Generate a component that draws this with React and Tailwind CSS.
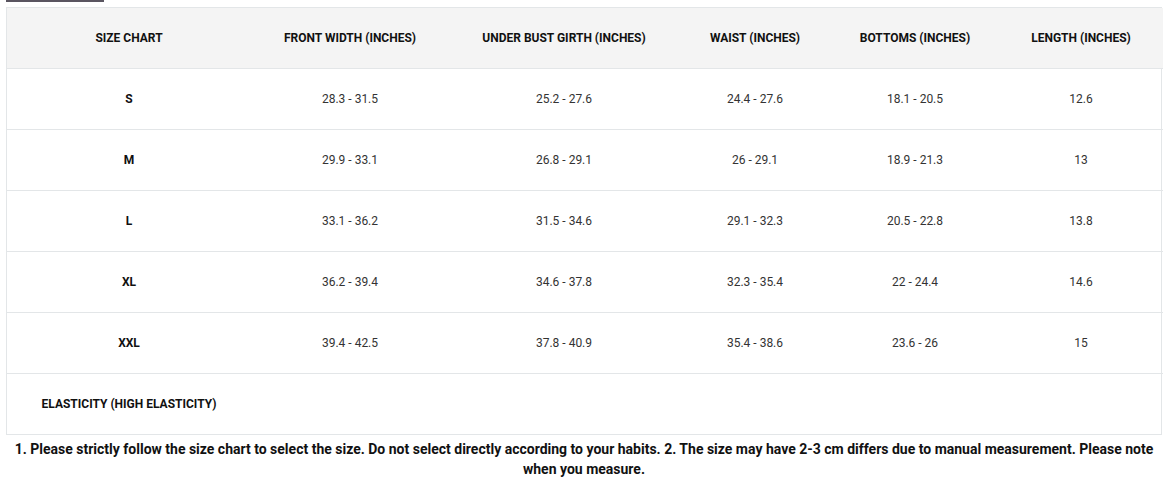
import React from "react";

const headers = [
  "SIZE CHART",
  "FRONT WIDTH (INCHES)",
  "UNDER BUST GIRTH (INCHES)",
  "WAIST (INCHES)",
  "BOTTOMS (INCHES)",
  "LENGTH (INCHES)",
];

const rows = [
  ["S", "28.3 - 31.5", "25.2 - 27.6", "24.4 - 27.6", "18.1 - 20.5", "12.6"],
  ["M", "29.9 - 33.1", "26.8 - 29.1", "26 - 29.1", "18.9 - 21.3", "13"],
  ["L", "33.1 - 36.2", "31.5 - 34.6", "29.1 - 32.3", "20.5 - 22.8", "13.8"],
  ["XL", "36.2 - 39.4", "34.6 - 37.8", "32.3 - 35.4", "22 - 24.4", "14.6"],
  ["XXL", "39.4 - 42.5", "37.8 - 40.9", "35.4 - 38.6", "23.6 - 26", "15"],
];

const widths = ["w-[244px]", "w-[198px]", "w-[230px]", "w-[152px]", "w-[168px]", "w-[164px]"];

export default function App() {
  return (
    <div className="w-[1168px] h-[492px] bg-white font-['Roboto',sans-serif] text-[#222]">
      <div className="ml-[6px] w-[98px] h-[2px] bg-[#5a5560]" />
      <div className="mx-[6px] mt-[5px] border border-[#e3e6e8]">
        <table className="w-full border-collapse table-fixed text-[12px]">
          <colgroup>
            {widths.map((w, i) => (
              <col key={i} className={w} />
            ))}
          </colgroup>
          <thead>
            <tr className="h-[60px] bg-[#f4f4f4] border-b border-[#e3e6e8]">
              {headers.map((h) => (
                <th key={h} className="font-bold text-[#111] text-center align-middle p-0">
                  {h}
                </th>
              ))}
            </tr>
          </thead>
          <tbody>
            {rows.map((r) => (
              <tr key={r[0]} className="h-[61px] border-b border-[#e3e6e8]">
                {r.map((c, i) => (
                  <td
                    key={i}
                    className={
                      "text-center align-middle p-0 " +
                      (i === 0 ? "font-bold text-[#111]" : "text-[#333]")
                    }
                  >
                    {c}
                  </td>
                ))}
              </tr>
            ))}
            <tr className="h-[61px]">
              <td className="text-center align-middle p-0 font-bold text-[#111]">
                ELASTICITY (HIGH ELASTICITY)
              </td>
              <td />
              <td />
              <td />
              <td />
              <td />
            </tr>
          </tbody>
        </table>
      </div>
      <p className="mt-[4px] px-[8px] text-center text-[14px] leading-[20px] font-bold text-[#111]">
        1. Please strictly follow the size chart to select the size. Do not select directly according to your habits. 2. The size may have 2-3 cm differs due to manual measurement. Please note when you measure.
      </p>
    </div>
  );
}
